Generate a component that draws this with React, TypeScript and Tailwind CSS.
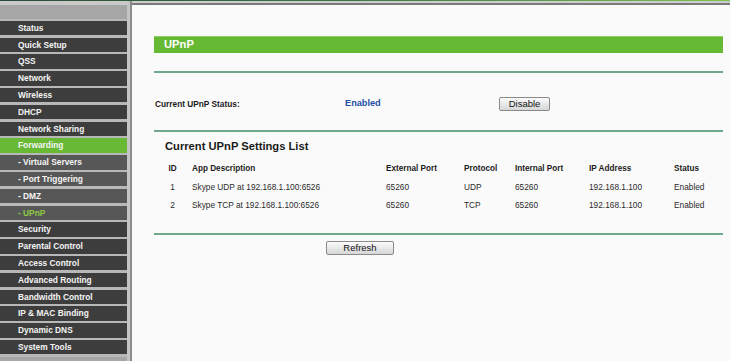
import React from "react";

type MenuItem = { label: string; sub?: boolean; active?: boolean; current?: boolean };

const menu: MenuItem[] = [
  { label: "Status" },
  { label: "Quick Setup" },
  { label: "QSS" },
  { label: "Network" },
  { label: "Wireless" },
  { label: "DHCP" },
  { label: "Network Sharing" },
  { label: "Forwarding", active: true },
  { label: "- Virtual Servers", sub: true },
  { label: "- Port Triggering", sub: true },
  { label: "- DMZ", sub: true },
  { label: "- UPnP", sub: true, current: true },
  { label: "Security" },
  { label: "Parental Control" },
  { label: "Access Control" },
  { label: "Advanced Routing" },
  { label: "Bandwidth Control" },
  { label: "IP & MAC Binding" },
  { label: "Dynamic DNS" },
  { label: "System Tools" },
];

const rows = [
  { id: "1", desc: "Skype UDP at 192.168.1.100:6526", ext: "65260", proto: "UDP", int: "65260", ip: "192.168.1.100", status: "Enabled" },
  { id: "2", desc: "Skype TCP at 192.168.1.100:6526", ext: "65260", proto: "TCP", int: "65260", ip: "192.168.1.100", status: "Enabled" },
];

function Btn({ label, w }: { label: string; w: string }) {
  return (
    <div
      className={`${w} h-[14px] flex items-center justify-center border border-[#8a8a8a] rounded-[2px] bg-linear-to-b from-[#fbfbfb] to-[#d6d6d6] text-[9.5px] leading-none text-[#111]`}
    >
      {label}
    </div>
  );
}

function Row({ cells, header }: { cells: string[]; header?: boolean }) {
  const cls = header ? "font-bold text-[8.2px] text-[#1c1c1c]" : "text-[8.3px] text-[#2a2a2a]";
  return (
    <div className={`grid grid-cols-[32px_194px_78px_51px_74px_85px_1fr] h-[18px] items-center whitespace-nowrap ${cls}`}>
      <div className="w-[25px] text-center">{cells[0]}</div>
      {cells.slice(1).map((c, i) => (
        <div key={i}>{c}</div>
      ))}
    </div>
  );
}

export default function App() {
  return (
    <div className="w-[730px] h-[361px] overflow-hidden bg-[#fafafa] flex flex-col font-['Liberation_Sans',Arial,sans-serif]">
      <div className="h-[1px] bg-linear-to-r from-[#2a4a38] via-[#3d7a45] to-[#7cc450]" />
      <div className="flex flex-1">
        {/* Sidebar */}
        <div className="w-[127px] flex flex-col bg-[#a6a6a6]">
          <div className="h-[4px] bg-[#c9c9c9]" />
          <div className="h-[13.5px] bg-[#a6a6a6]" />
          <div className="h-[2.33px] bg-[#b8b8b8]" />
          {menu.map((m) => (
            <div key={m.label} className="h-[16.8px] flex flex-col">
              <div
                className={`h-[14.4px] flex items-center pl-[18px] text-[8.35px] font-bold whitespace-nowrap ${
                  m.active ? "bg-[#68b934]" : m.sub ? "bg-[#575757]" : "bg-[#3d3d3d]"
                } ${m.current ? "text-[#8fc843]" : "text-[#f4f4f4]"}`}
              >
                {m.label}
              </div>
              <div className="h-[2.4px] bg-[#b8b8b8]" />
            </div>
          ))}
        </div>
        {/* Divider */}
        <div className="w-[3px] bg-[#c4c4c4]" />
        <div className="w-[2px] bg-[#8c8c8c]" />
        {/* Content */}
        <div className="flex-1 flex flex-col">
          <div className="h-[2px] bg-[#cdcdcd]" />
          <div className="h-[2px] bg-[#7a7a7a]" />
          <div className="flex-1 pl-[22px] pr-[7px] flex flex-col">
            <div className="mt-[31px] h-[17px] bg-[#66b933] border-t border-[#8fd064] flex items-center pl-[10px]">
              <span className="text-white font-bold text-[11.2px] leading-none">UPnP</span>
            </div>
            <div className="mt-[18px] h-[2px] bg-[#6ea98b]" />
            <div className="mt-[24px] h-[14px] flex items-center whitespace-nowrap">
              <div className="w-[191px] pl-[1px] text-[8.3px] font-bold text-[#1a1a1a]">Current UPnP Status:</div>
              <div className="w-[154px] text-[9.2px] font-bold text-[#1f4fa6]">Enabled</div>
              <Btn label="Disable" w="w-[51px]" />
            </div>
            <div className="mt-[19px] h-[2px] bg-[#6ea98b]" />
            <div className="mt-[6px] h-[16px] pl-[11px] text-[11.2px] leading-[16px] font-bold text-[#1a1a1a] whitespace-nowrap">
              Current UPnP Settings List
            </div>
            <div className="mt-[6px] pl-[6px] flex flex-col">
              <Row header cells={["ID", "App Description", "External Port", "Protocol", "Internal Port", "IP Address", "Status"]} />
              {rows.map((r) => (
                <Row key={r.id} cells={[r.id, r.desc, r.ext, r.proto, r.int, r.ip, r.status]} />
              ))}
            </div>
            <div className="mt-[19px] h-[2px] bg-[#6ea98b]" />
            <div className="mt-[6px] pl-[172px]">
              <Btn label="Refresh" w="w-[68px]" />
            </div>
          </div>
        </div>
      </div>
    </div>
  );
}
